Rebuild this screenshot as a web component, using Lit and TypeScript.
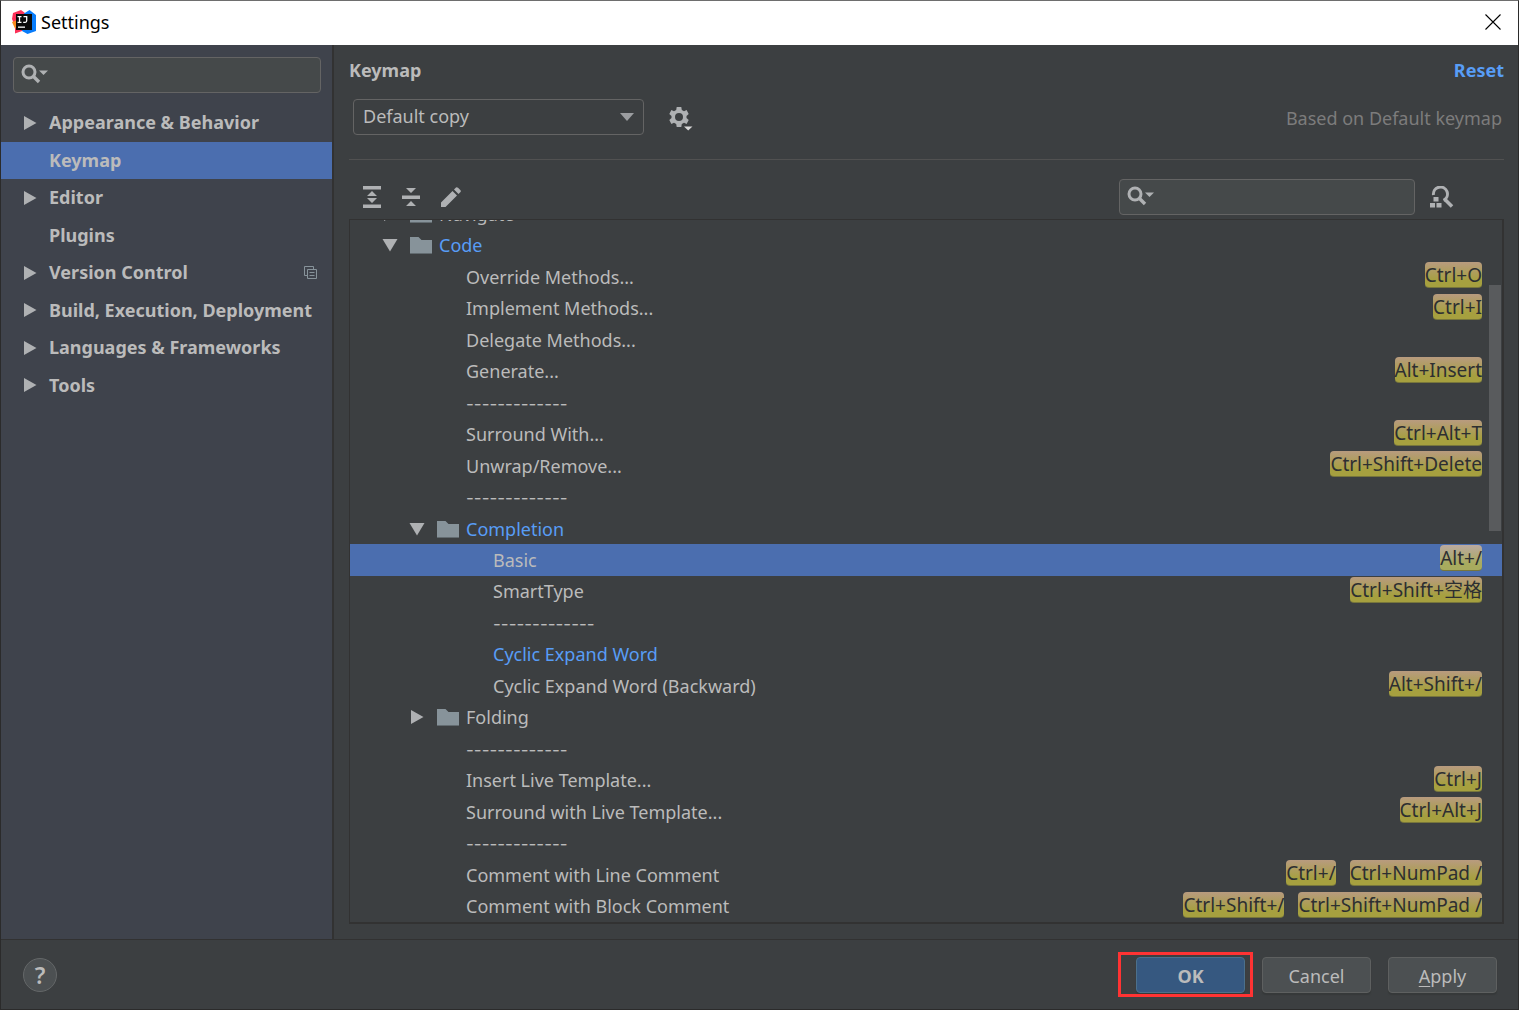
import { LitElement, html, css, svg, nothing } from "lit";
import { customElement, state } from "lit/decorators.js";
import { classMap } from "lit/directives/class-map.js";

interface Section {
  name: string;
  group: boolean;
  projectLevel?: boolean;
}

interface Row {
  label: string;
  level: number;
  kind: "folder" | "action" | "separator";
  open?: boolean;
  changed?: boolean;
  keys?: string[];
}

const SECTIONS: Section[] = [
  { name: "Appearance & Behavior", group: true },
  { name: "Keymap", group: false },
  { name: "Editor", group: true },
  { name: "Plugins", group: false },
  { name: "Version Control", group: true, projectLevel: true },
  { name: "Build, Execution, Deployment", group: true },
  { name: "Languages & Frameworks", group: true },
  { name: "Tools", group: true },
];

const separator = (level: number): Row => ({ label: "-------------", level, kind: "separator" });
const action = (label: string, level: number, keys: string[] = [], changed = false): Row => ({
  label,
  level,
  kind: "action",
  keys,
  changed,
});

const ROWS: Row[] = [
  { label: "Navigate", level: 1, kind: "folder", open: false },
  { label: "Code", level: 1, kind: "folder", open: true, changed: true },
  action("Override Methods...", 2, ["Ctrl+O"]),
  action("Implement Methods...", 2, ["Ctrl+I"]),
  action("Delegate Methods...", 2),
  action("Generate...", 2, ["Alt+Insert"]),
  separator(2),
  action("Surround With...", 2, ["Ctrl+Alt+T"]),
  action("Unwrap/Remove...", 2, ["Ctrl+Shift+Delete"]),
  separator(2),
  { label: "Completion", level: 2, kind: "folder", open: true, changed: true },
  action("Basic", 3, ["Alt+/"]),
  action("SmartType", 3, ["Ctrl+Shift+空格"]),
  separator(3),
  action("Cyclic Expand Word", 3, [], true),
  action("Cyclic Expand Word (Backward)", 3, ["Alt+Shift+/"]),
  { label: "Folding", level: 2, kind: "folder", open: false },
  separator(2),
  action("Insert Live Template...", 2, ["Ctrl+J"]),
  action("Surround with Live Template...", 2, ["Ctrl+Alt+J"]),
  separator(2),
  action("Comment with Line Comment", 2, ["Ctrl+/", "Ctrl+NumPad /"]),
  action("Comment with Block Comment", 2, ["Ctrl+Shift+/", "Ctrl+Shift+NumPad /"]),
];

const ideaLogo = html`<svg width="24" height="24" viewBox="0 0 24 24" aria-hidden="true">
  <path d="M1 3 9 0 13 3V20L10 21 3 23.500 3 16 0 9Z" fill="#fc3158" />
  <path d="M0 12 5 10 6 17 3 18.500Z" fill="#fb8c1e" />
  <path d="M12 3.500 17.500 0 24 5V21L15.500 24 10 21Z" fill="#087cfa" />
  <rect x="4" y="4" width="16" height="16" fill="#0a0a0a" />
  <path
    d="M5.500 6.700H9.500M7.500 6.700V12.300M5.500 12.300H9.500M11.500 6.700H14.700V10.800Q14.700 12.300 13.200 12.300H11.200"
    fill="none"
    stroke="#fff"
    stroke-width="1.300"
  />
  <rect x="6" y="16.500" width="7" height="1.300" fill="#fff" />
</svg>`;

const closeIcon = html`<svg width="16" height="16" viewBox="0 0 16 16" aria-hidden="true">
  <path d="M.5.5 15.500 15.500M15.500.5.5 15.500" stroke="#000" stroke-width="1.100" />
</svg>`;

const searchIcon = html`<svg width="28" height="20" viewBox="0 0 28 20" aria-hidden="true">
  <circle cx="8" cy="8" r="6" fill="none" stroke="#afb1b3" stroke-width="3" />
  <path d="M12 12 18 18" stroke="#afb1b3" stroke-width="3.400" />
  <path d="M18 6.500H27L22.500 11Z" fill="#afb1b3" />
</svg>`;

const gearIcon = html`<svg width="26" height="26" viewBox="0 0 26 26" aria-hidden="true">
  <g fill="#afb1b3" transform="translate(11 11)">
    <path
      fill-rule="evenodd"
      d="M-2.300-10H2.300L2.800-7 5-5.800 7.600-6.900 9.700-2.900 7.500-1V1L9.700 2.900 7.600 6.900 5 5.800 2.800 7 2.300 10H-2.300L-2.800 7-5 5.800-7.600 6.900-9.700 2.900-7.500 1V-1L-9.700-2.900-7.600-6.900-5-5.800-2.800-7ZM0-4A4 4 0 1 0 0 4 4 4 0 1 0 0-4Z"
    />
  </g>
  <path d="M14.500 19.500H25.500L20 25.500Z" fill="#3c3f41" />
  <path d="M16 20.500H24.500L20.200 24.500Z" fill="#d8d8d8" />
</svg>`;

const expandIcon = html`<svg width="18" height="22" viewBox="0 0 18 22" aria-hidden="true">
  <path d="M0 0H18V3.500H0ZM0 18.500H18V22H0ZM9 5 14 10H4ZM4 12H14L9 17Z" fill="#afb1b3" />
</svg>`;

const collapseIcon = html`<svg width="18" height="20" viewBox="0 0 18 20" aria-hidden="true">
  <path d="M4 1H14L9 6ZM0 8.500H18V12H0ZM9 14 14 19H4Z" fill="#afb1b3" />
</svg>`;

const pencilIcon = html`<svg width="20" height="20" viewBox="0 0 20 20" aria-hidden="true">
  <path
    d="M0 15.500 11.500 4 16 8.500 4.500 20H0ZM13 2.500 15 .5Q16 0 17 .8L19.300 3Q20.200 4 19.500 5L17.500 7Z"
    fill="#afb1b3"
  />
</svg>`;

const findKeyIcon = html`<svg width="24" height="22" viewBox="0 0 24 22" aria-hidden="true">
  <path d="M3.500 9A7 7 0 1 1 13.500 14.300" fill="none" stroke="#afb1b3" stroke-width="3" />
  <path d="M15 13.500 22 20.500" stroke="#afb1b3" stroke-width="3.600" />
  <path d="M3.500 11H8.500V15.500H3.500ZM0 17H5V21.500H0ZM6.500 17H11.500V21.500H6.500Z" fill="#afb1b3" />
</svg>`;

const projectIcon = html`<svg class="project" width="13" height="13" viewBox="0 0 13 13" aria-label="For current project">
  <path d="M3 9.500H.5V.5H9.500V3" fill="none" stroke="#87939a" />
  <path d="M3.500 3.500H12.500V12.500H3.500ZM5.500 6.500H10.500M5.500 9.500H10.500" fill="none" stroke="#87939a" />
</svg>`;

const arrow = (open: boolean) => html`<svg width="16" height="16" viewBox="0 0 16 16" aria-hidden="true">
  ${open
    ? svg`<path d="M.5 2H15.500L8 14.500Z" fill="#afb1b3" />`
    : svg`<path d="M2 1 14.500 8 2 15Z" fill="#afb1b3" />`}
</svg>`;

const folderIcon = html`<svg width="22" height="18" viewBox="0 0 22 18" aria-hidden="true">
  <path d="M0 1H8.500L11.500 4H22V17H0Z" fill="#87939a" />
  <path d="M0 17.500H22" stroke="#626b70" />
</svg>`;

@customElement("app-root")
export class AppRoot extends LitElement {
  @state() private section = "Keymap";
  @state() private selectedRow = 11;

  static styles = css`
    :host {
      display: block;
      height: 100vh;
      min-height: 800px;
      font-family: "Noto Sans", "Noto Sans CJK SC", sans-serif;
      font-size: 18px;
      line-height: 24px;
      color: #bbbbbb;
    }
    * {
      box-sizing: border-box;
    }
    svg {
      display: block;
      flex: none;
    }
    button,
    input,
    select {
      font: inherit;
      color: inherit;
      margin: 0;
      padding: 0;
    }
    .icon-button {
      display: grid;
      place-items: center;
      border: 0;
      background: none;
    }
    .window {
      display: flex;
      flex-direction: column;
      height: 100%;
      background: #3c3f41;
      border: 1px solid #2b2b2b;
      border-top-color: #6e6e6e;
    }
    .titlebar {
      display: flex;
      align-items: center;
      gap: 5px;
      flex: none;
      height: 44px;
      padding: 0 17px 2px 11px;
      background: #ffffff;
      color: #000000;
    }
    .titlebar h1 {
      flex: 1;
      margin: 0;
      font-size: inherit;
      font-weight: 400;
    }
    .body {
      display: flex;
      flex: 1;
      min-height: 0;
    }
    .sidebar {
      flex: none;
      width: 333px;
      padding-top: 12px;
      background: #3f434c;
      border-right: 2px solid #323232;
    }
    .search {
      display: flex;
      align-items: center;
      height: 36px;
      padding: 0 7px;
      gap: 4px;
      background: #45494a;
      border: 1px solid #646464;
      border-radius: 4px;
    }
    .search input {
      flex: 1;
      min-width: 0;
      border: 0;
      outline: 0;
      background: none;
    }
    .search svg {
      margin-bottom: 2px;
    }
    .sidebar .search {
      margin: 0 11px 11px 12px;
    }
    .sections {
      display: grid;
      grid-template-columns: minmax(0, 1fr);
      grid-auto-rows: 1fr;
      height: 300px;
      margin: 0;
      padding: 0;
      list-style: none;
    }
    .section {
      display: grid;
      grid-template-columns: 16px minmax(0, 1fr) auto;
      align-items: center;
      column-gap: 11px;
      height: 100%;
      padding: 0 15px 0 21px;
      font-weight: 700;
      color: inherit;
      text-decoration: none;
      white-space: nowrap;
    }
    .section .name {
      grid-column: 2;
      margin-bottom: 1px;
    }
    .section .project {
      grid-column: 3;
    }
    .section.selected,
    .row.selected {
      background: #4b6eaf;
    }
    .content {
      display: flex;
      flex-direction: column;
      flex: 1;
      min-width: 0;
      padding: 13px 14px 15px 15px;
    }
    .heading {
      display: flex;
      justify-content: space-between;
      flex: none;
      font-weight: 700;
    }
    .heading h2 {
      margin: 0;
      font-size: inherit;
    }
    .heading a {
      color: #589df6;
      text-decoration: none;
    }
    .scheme {
      display: flex;
      align-items: center;
      flex: none;
      height: 78px;
      padding: 0 2px 7px 4px;
      border-bottom: 1px solid #515151;
    }
    .combo {
      display: grid;
      align-items: center;
      width: 291px;
    }
    .combo select {
      grid-area: 1 / 1;
      height: 36px;
      padding: 0 36px 2px 9px;
      appearance: none;
      background: #3c3f41;
      border: 1px solid #646464;
      border-radius: 4px;
    }
    .combo svg {
      grid-area: 1 / 1;
      justify-self: end;
      margin-right: 10px;
      pointer-events: none;
    }
    .scheme .icon-button {
      margin: 4px 0 0 24px;
    }
    .based {
      margin: 2px 0 0 auto;
      color: #7c7c7c;
    }
    .toolbar {
      display: flex;
      align-items: center;
      gap: 21px;
      flex: none;
      height: 59px;
      padding: 14px 50px 0 14px;
    }
    .toolbar .search {
      width: 296px;
      margin-left: auto;
    }
    .toolbar .find {
      margin-left: -6px;
    }
    .tree {
      position: relative;
      display: flex;
      flex: 1;
      min-height: 0;
      overflow: hidden;
      border: 1px solid #323232;
      border-width: 1px 2px 2px 1px;
    }
    .rows {
      flex: 1;
      display: grid;
      grid-auto-rows: 1fr;
      margin: -22px 0 0;
      padding: 0;
    }
    .row {
      display: flex;
      align-items: center;
      gap: 7px;
      min-height: 0;
      padding-right: 20px;
      white-space: nowrap;
    }
    .level-1 {
      padding-left: 32px;
    }
    .level-2 {
      padding-left: 59px;
    }
    .level-3 {
      padding-left: 86px;
    }
    .action,
    .separator {
      padding-left: 116px;
    }
    .action.level-3,
    .separator.level-3 {
      padding-left: 143px;
    }
    .row .icon-button {
      margin-right: 5px;
    }
    .changed {
      color: #589df6;
    }
    .separator {
      padding-top: 2px;
      font-family: Inter, sans-serif;
      font-size: 17px;
    }
    .keys {
      display: flex;
      gap: 14px;
      margin: 0 0 3px auto;
    }
    kbd {
      height: 26px;
      border-radius: 4px;
      border-bottom: 1px solid #77763c;
      background: linear-gradient(#b89b7f, #a6a03f 75%);
      color: #2d2f31;
      font-family: inherit;
      font-size: 19px;
      line-height: 27px;
    }
    .selected kbd {
      background: linear-gradient(#bba9a0, #a8ab5e 75%);
    }
    .thumb {
      position: absolute;
      top: 65px;
      right: 1px;
      width: 12px;
      height: 35%;
      background: #595b5d;
    }
    .footer {
      display: flex;
      align-items: center;
      flex: none;
      gap: 17px;
      height: 70px;
      padding: 0 21px 0 22px;
      border-top: 1px solid #323232;
    }
    .help {
      width: 34px;
      height: 34px;
      margin-right: auto;
      border: 1px solid #646768;
      border-radius: 50%;
      background: #4c5052;
      font-size: 23px;
      font-weight: 600;
    }
    .button {
      width: 109px;
      height: 36px;
      padding-top: 2px;
      border: 1px solid #5e6060;
      border-radius: 4px;
      background: #4c5052;
      box-shadow: 0 2px 1px #36393a;
    }
    .primary {
      border-color: #4c708c;
      background: #365880;
      font-weight: 700;
    }
    .marked {
      position: relative;
    }
    .marked::after {
      content: "";
      position: absolute;
      inset: -5px -8px -4px -18px;
      border: 3px solid #ff3333;
      pointer-events: none;
    }
    .mnemonic {
      text-decoration: underline;
      text-underline-offset: 3px;
    }
  `;

  private renderSection(item: Section) {
    const selected = item.name === this.section;
    return html`<li>
      <a
        class=${classMap({ section: true, selected })}
        href="#"
        aria-current=${selected ? "page" : "false"}
        @click=${(e: Event) => {
          e.preventDefault();
          this.section = item.name;
        }}
      >
        ${item.group ? arrow(false) : nothing}
        <span class="name">${item.name}</span>
        ${item.projectLevel ? projectIcon : nothing}
      </a>
    </li>`;
  }

  private renderRow(row: Row, index: number) {
    const selected = index === this.selectedRow;
    const folder = row.kind === "folder";
    return html`<div
      class=${classMap({ row: true, [row.kind]: true, [`level-${row.level}`]: true, selected })}
      role="treeitem"
      aria-level=${row.level}
      aria-selected=${selected}
      @click=${() => (this.selectedRow = index)}
    >
      ${folder
        ? html`<button class="icon-button" aria-label=${`Toggle ${row.label}`}>${arrow(!!row.open)}</button>${folderIcon}`
        : nothing}
      <span class=${classMap({ changed: !!row.changed })}>${row.label}</span>
      ${row.keys?.length ? html`<span class="keys">${row.keys.map((k) => html`<kbd>${k}</kbd>`)}</span>` : nothing}
    </div>`;
  }

  render() {
    return html`<div class="window">
      <header class="titlebar">
        ${ideaLogo}
        <h1>Settings</h1>
        <button class="icon-button" aria-label="Close">${closeIcon}</button>
      </header>
      <div class="body">
        <nav class="sidebar" aria-label="Settings sections">
          <label class="search">${searchIcon}<input type="text" aria-label="Search settings" /></label>
          <ul class="sections">
            ${SECTIONS.map((s) => this.renderSection(s))}
          </ul>
        </nav>
        <main class="content">
          <div class="heading">
            <h2>Keymap</h2>
            <a href="#">Reset</a>
          </div>
          <div class="scheme">
            <div class="combo">
              <select aria-label="Keymap scheme">
                <option>Default copy</option>
              </select>
              <svg width="14" height="8" viewBox="0 0 14 8" aria-hidden="true">
                <path d="M0 0H14L7 8Z" fill="#9b9da0" />
              </svg>
            </div>
            <button class="icon-button" aria-label="Scheme actions">${gearIcon}</button>
            <span class="based">Based on Default keymap</span>
          </div>
          <div class="toolbar">
            <button class="icon-button" aria-label="Expand all">${expandIcon}</button>
            <button class="icon-button" aria-label="Collapse all">${collapseIcon}</button>
            <button class="icon-button" aria-label="Edit shortcut">${pencilIcon}</button>
            <label class="search">${searchIcon}<input type="text" aria-label="Search actions" /></label>
            <button class="icon-button find" aria-label="Find actions by shortcut">${findKeyIcon}</button>
          </div>
          <div class="tree">
            <div class="rows" role="tree" aria-label="Keymap actions">
              ${ROWS.map((r, i) => this.renderRow(r, i))}
            </div>
            <div class="thumb"></div>
          </div>
        </main>
      </div>
      <footer class="footer">
        <button class="help" aria-label="Help">?</button>
        <span class="marked"><button class="button primary">OK</button></span>
        <button class="button">Cancel</button>
        <button class="button"><span class="mnemonic">A</span>pply</button>
      </footer>
    </div>`;
  }
}
